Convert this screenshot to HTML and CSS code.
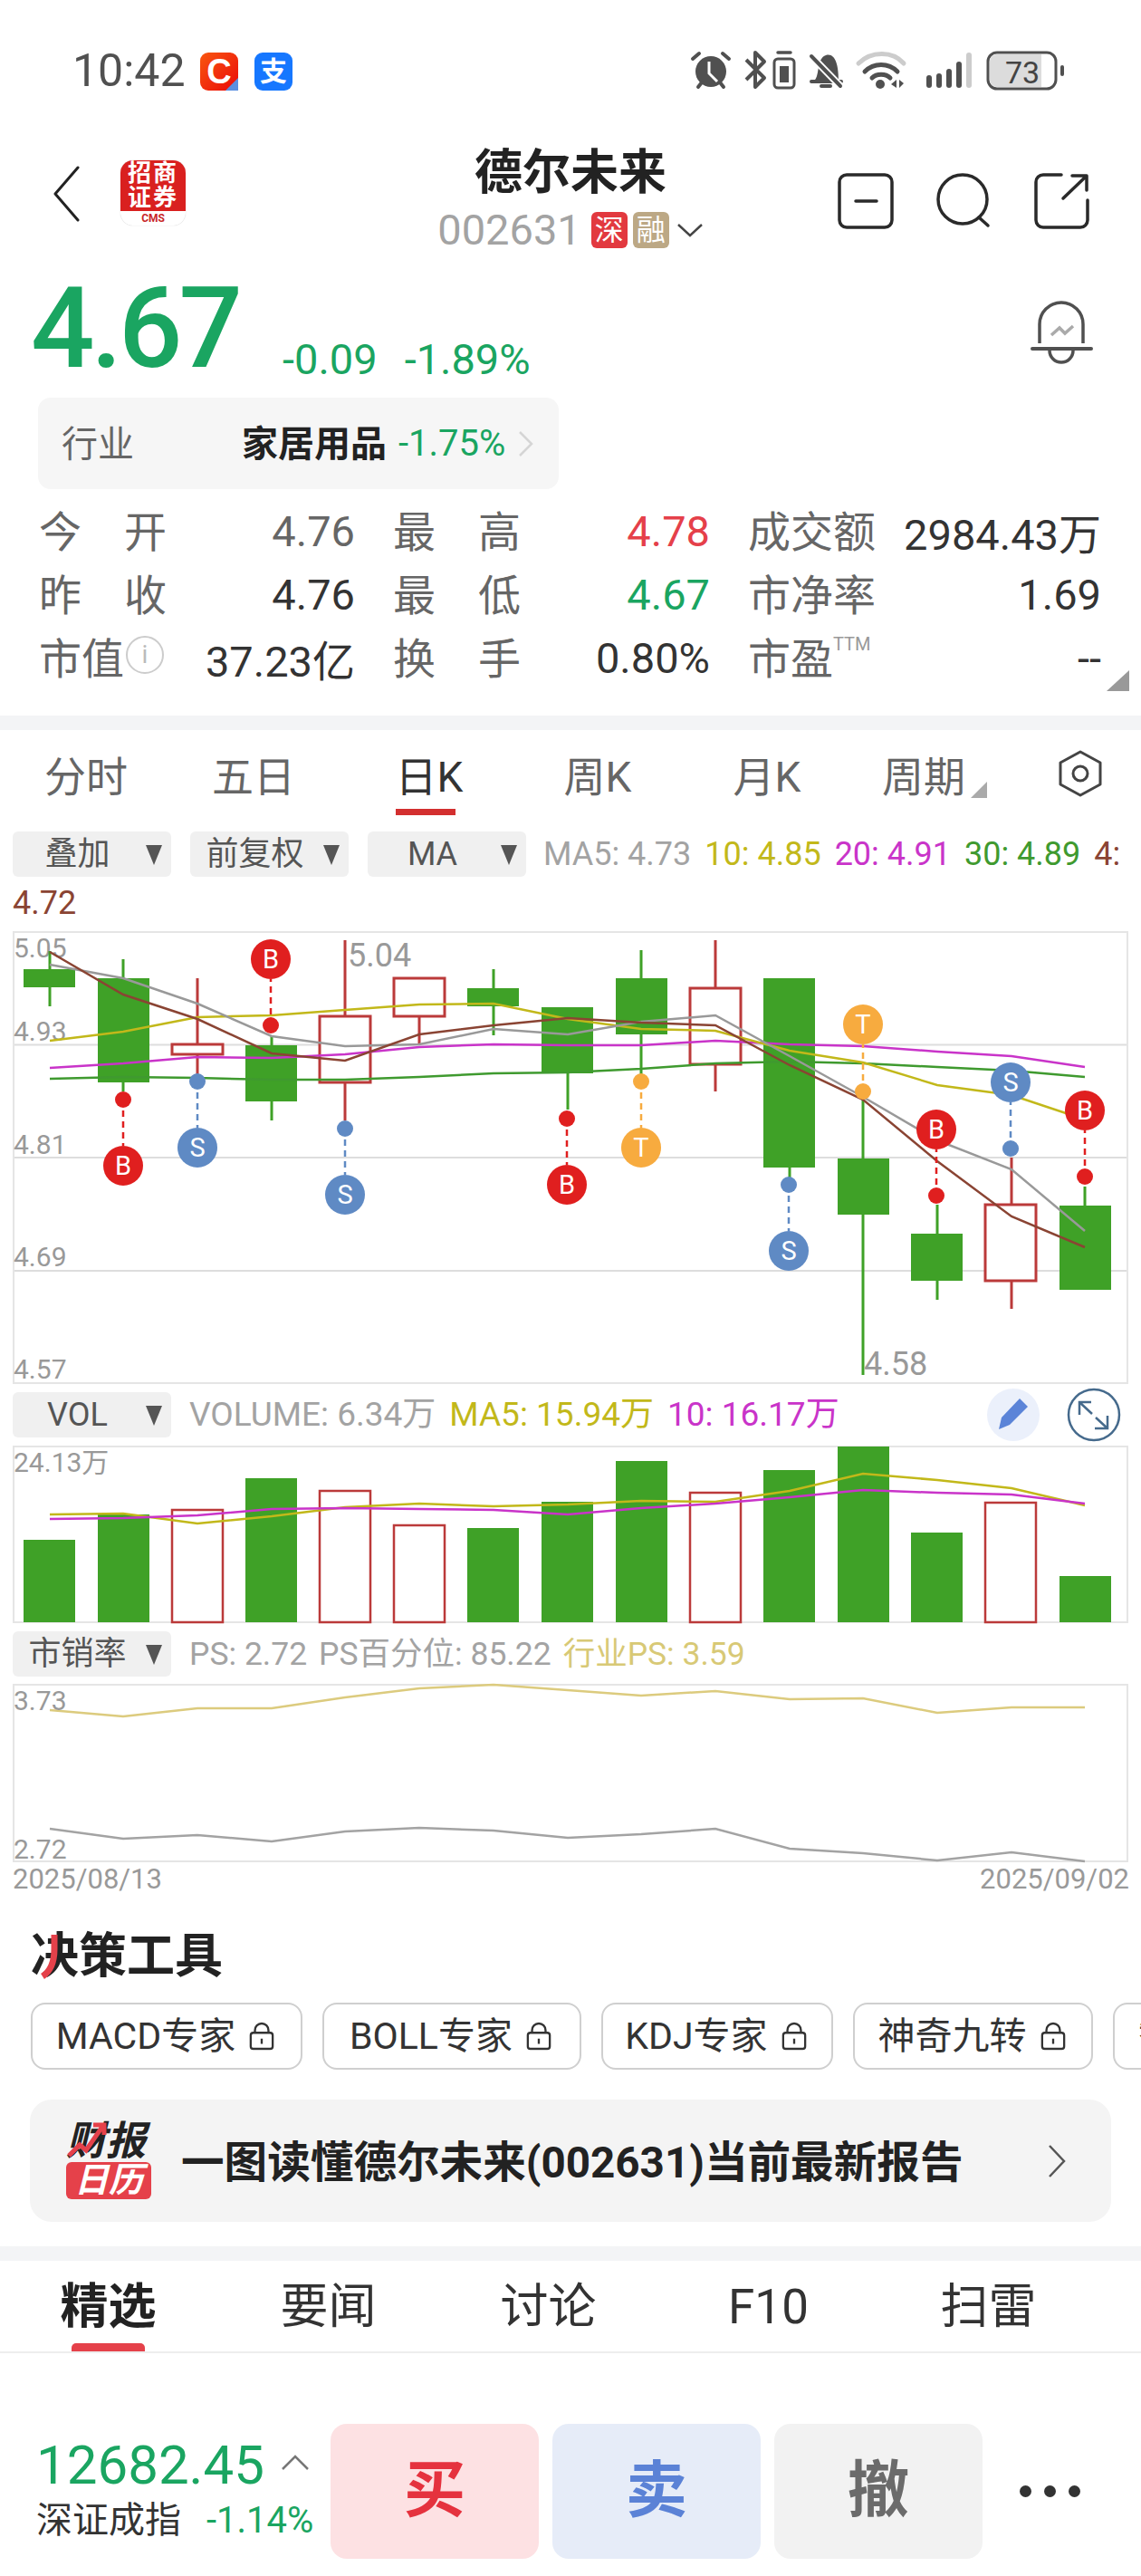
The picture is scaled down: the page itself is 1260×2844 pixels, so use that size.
FILE: index.html
```html
<!DOCTYPE html>
<html lang="zh-CN">
<head>
    <meta charset="UTF-8">
    <meta name="viewport" content="width=device-width, initial-scale=1.0">
    <title>德尔未来</title>
    <link rel="stylesheet" href="styles.css">
</head>
<body>

<div class="page">

    <!-- status bar -->
    <div class="status">
        <span class="clock">10:42</span>
        <span class="app-c">C</span>
        <span class="app-z">支</span>
        <svg class="status-icons" viewBox="760 50 420 56">
            <g fill="#505050" stroke="#505050">
                <circle cx="785" cy="79" r="17" stroke="none"/>
                <path d="M765 65l7-6M805 65l-7-6M771 96l4-5M799 96l-4-5" stroke-width="4" stroke-linecap="round" fill="none"/>
                <path d="M783 68v13l9 9" stroke="#fff" stroke-width="3" fill="none"/>
                <path d="M824 66l20 20-10 10V58l10 10-20 20" stroke-width="4" fill="none" stroke-linejoin="round"/>
                <rect x="855" y="65" width="22" height="32" rx="4" stroke-width="3" fill="none"/>
                <path d="M859 58h14" stroke-width="3.5" stroke-linecap="round"/>
                <rect x="861" y="73" width="10" height="18" stroke="none"/>
                <path d="M900 88c5-5 2-24 12-27 10-3 14 10 14 27z" stroke="none"/>
                <path d="M896 90h33M907 95h10" stroke-width="4" stroke-linecap="round"/>
                <path d="M896 62l32 33" stroke="#fff" stroke-width="8"/>
                <path d="M896 62l32 33" stroke-width="4" stroke-linecap="round"/>
                <path d="M948 70c14-14 38-14 50 0" stroke="#ccc" stroke-width="5" fill="none" stroke-linecap="round"/>
                <path d="M955 79c10-10 26-10 36 0M963 86c5-5 15-5 20 0" stroke-width="5" fill="none" stroke-linecap="round"/>
                <circle cx="972" cy="93" r="5" stroke="none"/>
                <path d="M990 88v9l-6-4zM993 88v9l5-5z" stroke="none"/>
                <g stroke="none">
                    <rect x="1023" y="83" width="6" height="14" rx="3"/>
                    <rect x="1034" y="81" width="6" height="16" rx="3"/>
                    <rect x="1045" y="76" width="6" height="21" rx="3"/>
                    <rect x="1056" y="68" width="6" height="29" rx="3"/>
                    <rect x="1067" y="58" width="6" height="39" rx="3" fill="#ccc"/>
                </g>
                <rect x="1091" y="58" width="75" height="40" rx="10" fill="none" stroke-width="3"/>
                <path d="M1093 68a8 8 0 0 1 8-8h49v36h-49a8 8 0 0 1-8-8z" fill="#dcdcdc" stroke="none"/>
                <rect x="1171" y="72" width="4" height="12" rx="2" stroke="none"/>
                <text x="1129" y="92" class="battery-text" stroke="none">73</text>
            </g>
        </svg>
    </div>

    <!-- header -->
    <div class="head">
        <div class="head-left">
            <svg class="back" viewBox="0 0 32 62"><path d="M28 2L3 31l25 29" fill="none" stroke="#222" stroke-width="3" stroke-linecap="round" stroke-linejoin="round"/></svg>
            <div class="broker">
                <div class="broker-name">招商<br>证券</div>
                <div class="broker-en">CMS</div>
            </div>
        </div>
        <div class="head-mid">
            <div class="stock-name">德尔未来</div>
            <div class="stock-code">
                <span>002631</span>
                <span class="badge badge-red">深</span>
                <span class="badge badge-tan">融</span>
                <svg class="code-arrow" viewBox="0 0 30 16"><path d="M2 2l13 12L28 2" fill="none" stroke="#444" stroke-width="2.5"/></svg>
            </div>
        </div>
        <svg class="head-icons" viewBox="920 186 290 72" fill="none" stroke="#2a2a2a" stroke-width="3.5" stroke-linecap="round" stroke-linejoin="round">
            <rect x="927" y="193" width="58" height="58" rx="8"/>
            <path d="M945 222h23"/>
            <circle cx="1063" cy="220" r="27"/>
            <path d="M1081 240l10 9"/>
            <path d="M1172 193h-20a8 8 0 0 0-8 8v42a8 8 0 0 0 8 8h41a8 8 0 0 0 8-8v-22"/>
            <path d="M1174 219l25-24M1184 194h16v16"/>
        </svg>
    </div>

    <!-- price -->
    <div class="price-row">
        <span class="price">4.67</span>
        <span class="price-chg">-0.09</span>
        <span class="price-chg">-1.89%</span>
        <svg class="alert" viewBox="1136 330 74 78" fill="none" stroke="#505050" stroke-width="3.5">
            <path d="M1148 379v-21a24 24 0 0 1 48 0v21"/>
            <path d="M1140 385h65" stroke-width="4" stroke-linecap="round"/>
            <path d="M1159 387a13 13 0 0 0 26 0"/>
            <path d="M1161 370l9-8 6 6 9-8" stroke="#aaa"/>
        </svg>
    </div>

    <div class="industry">
        <span class="industry-label">行业</span>
        <span class="industry-name">家居用品</span>
        <span class="green">-1.75%</span>
        <svg class="industry-arrow" viewBox="0 0 18 30"><path d="M2 2l13 13L2 28" fill="none" stroke="#d5d5d5" stroke-width="2.5"/></svg>
    </div>

    <!-- quote table -->
    <div class="stats">
        <div class="stat"><span class="stat-label wide"><i>今</i><i>开</i></span><span class="dim">4.76</span></div>
        <div class="stat"><span class="stat-label wide"><i>最</i><i>高</i></span><span class="red">4.78</span></div>
        <div class="stat"><span class="stat-label wide">成交额</span><span>2984.43万</span></div>
        <div class="stat"><span class="stat-label wide"><i>昨</i><i>收</i></span><span>4.76</span></div>
        <div class="stat"><span class="stat-label wide"><i>最</i><i>低</i></span><span class="green">4.67</span></div>
        <div class="stat"><span class="stat-label wide">市净率</span><span>1.69</span></div>
        <div class="stat"><span class="stat-label">市值<em class="info">i</em></span><span>37.23亿</span></div>
        <div class="stat"><span class="stat-label wide"><i>换</i><i>手</i></span><span>0.80%</span></div>
        <div class="stat"><span class="stat-label">市盈<sup class="ttm">TTM</sup></span><span>--</span></div>
        <span class="stats-more"></span>
    </div>

    <div class="band band-top"></div>

    <!-- period tabs -->
    <div class="periods">
        <span>分时</span>
        <span>五日</span>
        <span class="on">日K</span>
        <span>周K</span>
        <span>月K</span>
        <span class="has-corner">周期<b class="corner"></b></span>
        <svg class="hex" viewBox="0 0 50 54" fill="none" stroke="#444" stroke-width="3" stroke-linejoin="round">
            <path d="M25 3l22 12v24L25 51 3 39V15z"/>
            <circle cx="25" cy="27" r="8"/>
        </svg>
    </div>

    <!-- main chart -->
    <div class="tools-row row-ma">
        <span class="pill">叠加</span>
        <span class="pill">前复权</span>
        <span class="pill">MA</span>
        <span class="legend">
            <span class="c-gray">MA5: 4.73</span>
            <span class="c-yellow">10: 4.85</span>
            <span class="c-pink">20: 4.91</span>
            <span class="c-green">30: 4.89</span>
            <span class="c-brown">4:</span>
        </span>
    </div>
    <div class="legend-wrap c-brown">4.72</div>

    <div class="chart chart-k">
        <svg viewBox="16 1030 1228 496">
            <path class="grid" d="M16 1153.5H1244M16 1278H1244M16 1403H1244"/>
            <text class="axis" x="15" y="1057">5.05</text>
            <text class="axis" x="15" y="1149">4.93</text>
            <text class="axis" x="15" y="1274">4.81</text>
            <text class="axis" x="15" y="1398">4.69</text>
            <text class="axis" x="15" y="1522">4.57</text>

            <path class="wick-g" d="M55 1050V1111M136 1059V1205M300 1143V1237M545 1070V1143M627 1185V1225M708 1049V1186M872 1080V1300M953 1214V1518M1035 1330V1435M1198 1310V1331"/>
            <path class="wick-r" d="M218 1080V1186M381 1038V1237M463 1122V1153M790 1038V1205M1117 1278V1445"/>

            <rect class="body-g" x="26" y="1070" width="57" height="20"/>
            <rect class="body-g" x="108" y="1080" width="57" height="115"/>
            <rect class="body-r" x="190" y="1153" width="56" height="11"/>
            <rect class="body-g" x="271" y="1154" width="57" height="62"/>
            <rect class="body-r" x="353" y="1122" width="56" height="73"/>
            <rect class="body-r" x="435" y="1080" width="56" height="42"/>
            <rect class="body-g" x="516" y="1091" width="57" height="20"/>
            <rect class="body-g" x="598" y="1112" width="57" height="73"/>
            <rect class="body-g" x="680" y="1080" width="57" height="62"/>
            <rect class="body-r" x="762" y="1091" width="56" height="84"/>
            <rect class="body-g" x="843" y="1080" width="57" height="209"/>
            <rect class="body-g" x="925" y="1279" width="57" height="62"/>
            <rect class="body-g" x="1006" y="1362" width="57" height="52"/>
            <rect class="body-r" x="1088" y="1330" width="56" height="84"/>
            <rect class="body-g" x="1170" y="1331" width="57" height="93"/>

            <polyline class="ma l-green" points="55,1191 136,1189 218,1190 300,1192 381,1192 463,1189 545,1185 627,1184 708,1180 790,1174 872,1172 953,1174 1035,1178 1117,1182 1198,1189"/>
            <polyline class="ma l-pink" points="55,1179 136,1174 218,1167 300,1168 381,1164 463,1156 545,1153 627,1154 708,1154 790,1149 872,1153 953,1155 1035,1161 1117,1166 1198,1178"/>
            <polyline class="ma l-yellow" points="55,1149 136,1139 218,1123 300,1121 381,1115 463,1109 545,1108 627,1125 708,1136 790,1138 872,1160 953,1173 1035,1198 1117,1209 1198,1236"/>
            <polyline class="ma l-gray" points="55,1065 136,1080 218,1108 300,1144 381,1155 463,1153 545,1136 627,1142 708,1128 790,1121 872,1166 953,1211 1035,1259 1117,1291 1198,1359"/>
            <polyline class="ma l-brown" points="55,1051 136,1098 218,1125 300,1163 381,1171 463,1142 545,1132 627,1124 708,1129 790,1132 872,1176 953,1214 1035,1282 1117,1343 1198,1377"/>

            <!-- buy / sell marks -->
            <g class="mark m-buy">
                <path class="dash" d="M136 1214V1265M299 1132V1081M626 1235V1286M1034 1320V1269M1198 1299V1248"/>
                <circle cx="136" cy="1214" r="9"/><circle cx="136" cy="1287" r="22"/>
                <circle cx="299" cy="1132" r="9"/><circle cx="299" cy="1059" r="22"/>
                <circle cx="626" cy="1235" r="9"/><circle cx="626" cy="1308" r="22"/>
                <circle cx="1034" cy="1320" r="9"/><circle cx="1034" cy="1247" r="22"/>
                <circle cx="1198" cy="1299" r="9"/><circle cx="1198" cy="1226" r="22"/>
                <text x="136" y="1297">B</text>
                <text x="299" y="1069">B</text>
                <text x="626" y="1318">B</text>
                <text x="1034" y="1257">B</text>
                <text x="1198" y="1236">B</text>
            </g>
            <g class="mark m-sell">
                <path class="dash" d="M218 1194V1245M381 1246V1297M871 1308V1359M1116 1268V1217"/>
                <circle cx="218" cy="1194" r="9"/><circle cx="218" cy="1267" r="22"/>
                <circle cx="381" cy="1246" r="9"/><circle cx="381" cy="1319" r="22"/>
                <circle cx="871" cy="1308" r="9"/><circle cx="871" cy="1381" r="22"/>
                <circle cx="1116" cy="1268" r="9"/><circle cx="1116" cy="1195" r="22"/>
                <text x="218" y="1277">S</text>
                <text x="381" y="1329">S</text>
                <text x="871" y="1391">S</text>
                <text x="1116" y="1205">S</text>
            </g>
            <g class="mark m-t">
                <path class="dash" d="M708 1194V1245M953 1205V1153"/>
                <circle cx="708" cy="1194" r="9"/><circle cx="708" cy="1267" r="22"/>
                <circle cx="953" cy="1205" r="9"/><circle cx="953" cy="1131" r="22"/>
                <text x="708" y="1277">T</text>
                <text x="953" y="1141">T</text>
            </g>

            <text class="axis axis-big" x="384" y="1067">5.04</text>
            <text class="axis axis-big" x="954" y="1518">4.58</text>
        </svg>
    </div>

    <!-- volume -->
    <div class="tools-row row-vol">
        <span class="pill">VOL</span>
        <span class="legend">
            <span class="c-gray">VOLUME: 6.34万</span>
            <span class="c-yellow">MA5: 15.94万</span>
            <span class="c-pink">10: 16.17万</span>
        </span>
        <svg class="round-icons" viewBox="1088 1530 152 64">
            <circle cx="1119" cy="1562" r="29" fill="#ebf0fb"/>
            <path d="M1103 1578l3-13 20-21 9 9-20 20z" fill="#5b84d8"/>
            <circle cx="1208" cy="1562" r="28" fill="none" stroke="#456a8c" stroke-width="2.5"/>
            <path d="M1192 1562v-14h13M1192 1548l14 13M1223 1563v14h-14M1223 1577l-13-12" fill="none" stroke="#456a8c" stroke-width="2.5"/>
        </svg>
    </div>
    <div class="chart chart-vol">
        <svg viewBox="16 1598 1228 192">
            <g class="bar-g">
                <rect x="26" y="1700" width="57" height="91"/>
                <rect x="108" y="1672" width="57" height="119"/>
                <rect x="271" y="1632" width="57" height="159"/>
                <rect x="516" y="1687" width="57" height="104"/>
                <rect x="598" y="1658" width="57" height="133"/>
                <rect x="680" y="1613" width="57" height="178"/>
                <rect x="843" y="1623" width="57" height="168"/>
                <rect x="925" y="1597" width="57" height="194"/>
                <rect x="1006" y="1692" width="57" height="99"/>
                <rect x="1170" y="1740" width="57" height="51"/>
            </g>
            <g class="bar-r">
                <rect x="190" y="1667" width="56" height="124"/>
                <rect x="353" y="1646" width="56" height="145"/>
                <rect x="435" y="1684" width="56" height="107"/>
                <rect x="762" y="1648" width="56" height="143"/>
                <rect x="1088" y="1659" width="56" height="132"/>
            </g>
            <polyline class="ma l-yellow" points="55,1672 136,1671 218,1682 300,1674 381,1664 463,1660 545,1663 627,1661 708,1657 790,1658 872,1646 953,1627 1035,1634 1117,1643 1198,1662"/>
            <polyline class="ma l-pink" points="55,1677 136,1676 218,1673 300,1666 381,1665 463,1666 545,1667 627,1672 708,1665 790,1660 872,1653 953,1645 1035,1648 1117,1650 1198,1660"/>
            <text class="axis" x="15" y="1625">24.13万</text>
        </svg>
    </div>

    <!-- PS -->
    <div class="tools-row row-ps">
        <span class="pill">市销率</span>
        <span class="legend">
            <span class="c-gray">PS: 2.72</span>
            <span class="c-gray">PS百分位: 85.22</span>
            <span class="c-sand">行业PS: 3.59</span>
        </span>
    </div>
    <div class="chart chart-ps">
        <svg viewBox="16 1861 1228 193">
            <polyline class="ma l-sand" points="55,1888 136,1895 218,1886 300,1886 381,1874 463,1864 545,1860 627,1866 708,1872 790,1867 872,1876 953,1875 1035,1891 1117,1885 1198,1885"/>
            <polyline class="ma l-stone" points="55,2019 136,2030 218,2026 300,2033 381,2022 463,2018 545,2021 627,2029 708,2025 790,2019 872,2041 953,2046 1035,2054 1117,2045 1198,2055"/>
            <text class="axis" x="15" y="1888">3.73</text>
            <text class="axis" x="15" y="2052">2.72</text>
        </svg>
    </div>
    <div class="dates">
        <span>2025/08/13</span>
        <span>2025/09/02</span>
    </div>

    <!-- decision tools -->
    <div class="section-title">
        决策工具
        <svg class="title-mark" viewBox="0 0 26 52"><path d="M18 2v16c0 14-4 24-13 30" fill="none" stroke="#e5414a" stroke-width="7"/></svg>
    </div>
    <div class="chips">
        <span class="chip">MACD专家<svg class="lock" viewBox="0 0 30 34"><use href="#lock"/></svg></span>
        <span class="chip">BOLL专家<svg class="lock" viewBox="0 0 30 34"><use href="#lock"/></svg></span>
        <span class="chip">KDJ专家<svg class="lock" viewBox="0 0 30 34"><use href="#lock"/></svg></span>
        <span class="chip">神奇九转<svg class="lock" viewBox="0 0 30 34"><use href="#lock"/></svg></span>
        <span class="chip chip-cut">智能</span>
    </div>
    <svg class="defs">
        <symbol id="lock" viewBox="0 0 30 34">
            <path d="M7 13v-3a8 8 0 0 1 16 0v3" fill="none" stroke="#333" stroke-width="2.5"/>
            <rect x="2" y="13" width="26" height="19" rx="3" fill="none" stroke="#333" stroke-width="2.5"/>
            <path d="M15 20v6" stroke="#333" stroke-width="2.5"/>
        </symbol>
    </svg>

    <div class="report">
        <div class="report-logo">
            <div class="report-top">财报</div>
            <div class="report-bot">日历</div>
            <svg class="report-arrow" viewBox="0 0 46 40"><path d="M3 37l12-12 7 6L40 5M30 3h12v11" fill="none" stroke="#e5414a" stroke-width="5"/></svg>
        </div>
        <span class="report-text">一图读懂德尔未来(002631)当前最新报告</span>
        <svg class="report-arrow-r" viewBox="0 0 22 38"><path d="M3 2l16 17L3 36" fill="none" stroke="#555" stroke-width="2.5"/></svg>
    </div>

    <div class="band band-mid"></div>

    <!-- news tabs -->
    <div class="news-tabs">
        <span class="on">精选</span>
        <span>要闻</span>
        <span>讨论</span>
        <span>F10</span>
        <span>扫雷</span>
    </div>

    <!-- bottom bar -->
    <div class="bottom">
        <div class="index-box">
            <div class="index-top">
                <span class="index-val">12682.45</span>
                <svg class="index-up" viewBox="0 0 32 18"><path d="M2 16L16 2l14 14" fill="none" stroke="#777" stroke-width="2.5"/></svg>
            </div>
            <div class="index-sub">
                <span>深证成指</span>
                <span class="green">-1.14%</span>
            </div>
        </div>
        <div class="trade t-buy">买</div>
        <div class="trade t-sell">卖</div>
        <div class="trade t-undo">撤</div>
        <div class="more"><i></i><i></i><i></i></div>
    </div>

</div>

</body>
</html>
```

FILE: styles.css
```css
/* page */
html, body {
    margin: 0;
    padding: 0;
    background: #fff;
}
.page {
    width: 1260px;
    height: 2844px;
    overflow: hidden;
    font-family: Roboto, "Noto Sans CJK SC", sans-serif;
    color: #333;
}
.green { color: #1aa561; }
.red { color: #e5404a; }
.dim { color: #666; }

/* status bar */
.status {
    height: 120px;
    box-sizing: border-box;
    padding: 50px 0 0 80px;
    display: flex;
    align-items: flex-start;
}
.clock {
    font-size: 50px;
    line-height: 56px;
    color: #505050;
    width: 141px;
}
.app-c, .app-z {
    width: 42px;
    height: 42px;
    margin-top: 8px;
    border-radius: 9px;
    color: #fff;
    text-align: center;
    position: relative;
}
.app-c {
    background: linear-gradient(135deg, #f9560f, #ea0a0a);
    font: bold 38px/42px "Liberation Sans", sans-serif;
}
.app-c::after {
    content: "";
    position: absolute;
    right: 0;
    bottom: 0;
    border-left: 14px solid transparent;
    border-bottom: 14px solid #5b8fe0;
}
.app-z {
    margin-left: 18px;
    background: #1677ff;
    font-size: 30px;
    line-height: 42px;
    font-weight: bold;
}
.status-icons {
    width: 420px;
    height: 56px;
    margin-left: auto;
    margin-right: 80px;
}
.battery-text {
    font-size: 34px;
    text-anchor: middle;
    fill: #444;
}

/* header */
.head {
    height: 180px;
    display: grid;
    grid-template-columns: 1fr auto 1fr;
    position: relative;
}
.head-left {
    display: flex;
    align-items: flex-start;
    padding: 57px 0 0 58px;
}
.back {
    width: 32px;
    height: 62px;
    margin-top: 6px;
}
.broker {
    width: 72px;
    height: 72px;
    margin-left: 43px;
    border-radius: 14px;
    background: #fff;
    overflow: hidden;
    box-shadow: 0 0 1px #bbb;
}
.broker-name {
    height: 56px;
    background: #d9201f;
    color: #fff;
    font-size: 26px;
    line-height: 27px;
    letter-spacing: 2px;
    font-weight: bold;
    text-align: center;
    padding-top: 1px;
    box-sizing: border-box;
}
.broker-en {
    color: #c8282a;
    font: bold 12px/16px Roboto, sans-serif;
    text-align: center;
}
.head-mid {
    text-align: center;
    padding-top: 38px;
}
.stock-name {
    font-size: 53px;
    line-height: 66px;
    font-weight: bold;
    color: #222;
}
.stock-code {
    display: flex;
    align-items: center;
    font-size: 47px;
    line-height: 50px;
    color: #a3a3a3;
    margin-top: 5px;
}
.badge {
    width: 40px;
    height: 40px;
    margin-left: 6px;
    border-radius: 6px;
    color: #fff;
    font-size: 32px;
    line-height: 40px;
    text-align: center;
}
.badge-red { margin-left: 11px; background: #e2393f; }
.badge-tan { background: #bca885; }
.code-arrow {
    width: 30px;
    height: 16px;
    margin-left: 8px;
}
.head-icons {
    width: 290px;
    height: 72px;
    margin: 66px 0 0 auto;
    margin-right: 50px;
}

/* price */
.price-row {
    height: 130px;
    display: flex;
    align-items: flex-start;
    padding-left: 34px;
    color: #1aa561;
    position: relative;
}
.price {
    font-size: 124px;
    line-height: 124px;
    font-weight: 500;
    letter-spacing: -4px;
    width: 278px;
    margin-top: 1px;
}
.price-chg {
    font-size: 47px;
    line-height: 50px;
    margin-top: 72px;
    margin-right: 30px;
}
.alert {
    width: 74px;
    height: 78px;
    margin: 30px 50px 0 auto;
}
.industry {
    width: 575px;
    height: 101px;
    margin: 9px 0 0 42px;
    padding-left: 26px;
    box-sizing: border-box;
    background: #f6f6f6;
    border-radius: 14px;
    display: flex;
    align-items: center;
    font-size: 40px;
}
.industry-label { color: #666; width: 199px; margin-bottom: 6px; }
.industry-name { color: #222; font-weight: bold; width: 173px; margin-bottom: 6px; }
.industry-arrow {
    width: 18px;
    height: 30px;
    margin-left: 14px;
}

/* quote table */
.stats {
    margin: 11px 0 0 43px;
    width: 1174px;
    display: grid;
    grid-template-columns: 349px 350px 390px;
    column-gap: 42px;
    grid-auto-rows: 70px;
    font-size: 47px;
    position: relative;
}
.stat {
    display: flex;
    justify-content: space-between;
    align-items: center;
}
.stat-label {
    color: #666;
    display: flex;
    align-items: center;
    margin-bottom: 6px;
}
.stat-label.wide {
    width: 141px;
    justify-content: space-between;
    white-space: nowrap;
}
.stat-label i { font-style: normal; }
.info {
    width: 38px;
    height: 38px;
    margin-left: 2px;
    border: 2px solid #ccc;
    border-radius: 50%;
    color: #bbb;
    font: normal 28px/38px Roboto, sans-serif;
    text-align: center;
}
.ttm {
    font-size: 20px;
    color: #999;
    line-height: 20px;
    align-self: flex-start;
    margin-top: 12px;
}
.stats-more {
    position: absolute;
    right: -30px;
    bottom: -2px;
    border-left: 25px solid transparent;
    border-bottom: 23px solid #999;
}
.band { background: #f3f4f6; }
.band-top { height: 16px; margin-top: 29px; }
.band-mid { height: 16px; margin-top: 27px; }

/* period tabs */
.periods {
    height: 95px;
    display: grid;
    grid-template-columns: 190px 180px 208px 164px 210px 136px 1fr;
    align-items: center;
    font-size: 46px;
    color: #666;
    text-align: center;
}
.periods .on {
    color: #333;
    position: relative;
}
.periods .on::after {
    content: "";
    position: absolute;
    left: 67px;
    top: 72px;
    width: 66px;
    height: 7px;
    background: #d32f2f;
}
.has-corner { position: relative; }
.corner {
    position: absolute;
    right: -2px;
    bottom: 6px;
    border-left: 18px solid transparent;
    border-bottom: 18px solid #aaa;
}
.hex {
    width: 50px;
    height: 54px;
    justify-self: end;
    margin-right: 42px;
}

/* chart toolbars */
.tools-row {
    display: flex;
    align-items: center;
    height: 50px;
    margin-top: 9px;
    padding-left: 14px;
    white-space: nowrap;
}
.row-ma { margin-top: 17px; }
.pill {
    width: 175px;
    height: 50px;
    box-sizing: border-box;
    padding-right: 32px;
    margin-right: 21px;
    flex: none;
    background: #f0f0f0;
    border-radius: 6px;
    color: #555;
    font-size: 36px;
    line-height: 50px;
    text-align: center;
    position: relative;
}
.pill::after {
    content: "";
    position: absolute;
    right: 10px;
    top: 15px;
    border-top: 22px solid #555;
    border-left: 9px solid transparent;
    border-right: 9px solid transparent;
}
.legend {
    display: flex;
    align-items: baseline;
    gap: 15px;
    font-size: 36px;
    line-height: 50px;
    margin-left: -2px;
}
.row-vol .pill, .row-ps .pill { margin-right: 22px; }
.row-vol .legend { font-size: 37px; }
.row-ps .legend { font-size: 35.5px; gap: 13px; }
.c-gray { color: #a3a3a3; }
.c-yellow { color: #c2b81a; }
.c-pink { color: #c934c9; }
.c-green { color: #3f9a2f; }
.c-brown { color: #8a4433; }
.c-sand { color: #d8c976; }
.legend-wrap {
    height: 60px;
    padding-left: 14px;
    font-size: 36px;
    line-height: 58px;
}

/* charts */
.chart {
    margin: 0 14px;
    box-sizing: border-box;
    border: 2px solid #e5e5e5;
}
.chart svg {
    display: block;
    width: 100%;
    height: 100%;
    overflow: visible;
}
.chart-k { height: 500px; }
.chart-vol { height: 196px; margin-top: 9px; }
.chart-ps { height: 197px; margin-top: 8px; }
.grid {
    stroke: #ddd;
    stroke-width: 2;
    fill: none;
}
.axis {
    font-size: 30px;
    fill: #999;
}
.axis-big { font-size: 36px; }
.wick-g, .wick-r { stroke-width: 3; fill: none; }
.wick-g { stroke: #3fa127; }
.wick-r { stroke: #bb3a3a; }
.body-g { fill: #3fa127; }
.body-r {
    fill: #fff;
    stroke: #bb3a3a;
    stroke-width: 3;
}
.ma {
    fill: none;
    stroke-width: 2.5;
}
.l-gray { stroke: #999; }
.l-brown { stroke: #8a4433; }
.l-yellow { stroke: #c2b81a; }
.l-pink { stroke: #c934c9; }
.l-green { stroke: #3f9a2f; }
.l-sand { stroke: #dccb7e; }
.l-stone { stroke: #a3a3a3; }
.mark text {
    font-size: 29px;
    fill: #fff;
    text-anchor: middle;
}
.dash {
    stroke-width: 2.5;
    stroke-dasharray: 7 5;
    fill: none;
}
.m-buy circle { fill: #e01f1f; }
.m-buy .dash { stroke: #e01f1f; }
.m-sell circle { fill: #5f8ac4; }
.m-sell .dash { stroke: #5f8ac4; }
.m-t circle { fill: #f7ab3f; }
.m-t .dash { stroke: #f7ab3f; }
.bar-g { fill: #3fa127; }
.bar-r rect {
    fill: #fff;
    stroke: #bb3a3a;
    stroke-width: 2.5;
}
.round-icons {
    width: 152px;
    height: 64px;
    margin-left: auto;
    margin-right: 20px;
    flex: none;
}
.dates {
    display: flex;
    justify-content: space-between;
    padding: 0 13px 0 14px;
    font-size: 31px;
    line-height: 34px;
    color: #999;
    margin-top: 2px;
}

/* decision tools */
.section-title {
    margin: 40px 0 0 34px;
    width: 212px;
    font-size: 53px;
    line-height: 56px;
    font-weight: bold;
    color: #222;
    position: relative;
}
.title-mark {
    position: absolute;
    left: 8px;
    top: 2px;
    width: 26px;
    height: 52px;
}
.chips {
    display: grid;
    grid-template-columns: 300px 286px 256px 265px 200px;
    gap: 22px;
    margin: 23px 0 0 34px;
    white-space: nowrap;
}
.chip {
    height: 74px;
    box-sizing: border-box;
    padding-right: 3px;
    border: 2px solid #cfcfcf;
    border-radius: 16px;
    display: flex;
    align-items: center;
    justify-content: center;
    font-size: 41px;
    line-height: 64px;
    color: #333;
}
.chip-cut { justify-content: flex-start; padding-left: 26px; }
.lock {
    width: 28px;
    height: 32px;
    margin-left: 15px;
}
.defs {
    display: block;
    width: 0;
    height: 0;
}
.report {
    width: 1194px;
    height: 135px;
    margin: 33px 0 0 33px;
    background: #f4f4f4;
    border-radius: 24px;
    display: flex;
    align-items: center;
    position: relative;
}
.report-logo {
    width: 94px;
    margin-left: 40px;
    position: relative;
}
.report-top {
    font-size: 44px;
    line-height: 42px;
    font-weight: bold;
    font-style: italic;
    color: #222;
    white-space: nowrap;
}
.report-bot {
    margin-top: 2px;
    height: 41px;
    background: #e5414a;
    border-radius: 6px;
    color: #fff;
    font-size: 38px;
    line-height: 40px;
    font-weight: bold;
    font-style: italic;
    text-align: center;
    white-space: nowrap;
}
.report-arrow {
    position: absolute;
    left: 0;
    top: 0;
    width: 46px;
    height: 40px;
}
.report-text {
    margin: 0 0 5px 33px;
    font-size: 47.6px;
    font-weight: bold;
    color: #222;
    white-space: nowrap;
}
.report-arrow-r {
    position: absolute;
    right: 49px;
    top: 49px;
    width: 22px;
    height: 38px;
}

/* news tabs */
.news-tabs {
    height: 102px;
    box-sizing: border-box;
    margin-left: -2px;
    display: grid;
    grid-template-columns: repeat(5, 243px);
    font-size: 53px;
    line-height: 103px;
    text-align: center;
    color: #333;
    border-bottom: 2px solid #eee;
}
.news-tabs .on {
    font-weight: bold;
    color: #222;
    position: relative;
}
.news-tabs .on::after {
    content: "";
    position: absolute;
    left: 81px;
    top: 91px;
    width: 81px;
    height: 9px;
    border-radius: 5px 5px 0 0;
    background: #e5414a;
}

/* bottom bar */
.bottom {
    display: flex;
    margin-top: 78px;
    height: 149px;
    position: relative;
}
.index-box {
    width: 365px;
    flex: none;
    padding-left: 40px;
    box-sizing: border-box;
}
.index-top {
    display: flex;
    align-items: center;
    margin-top: 12px;
}
.index-val {
    font-size: 60px;
    line-height: 68px;
    color: #1aa561;
}
.index-up {
    width: 32px;
    height: 18px;
    margin-left: 18px;
    margin-top: -6px;
}
.index-sub {
    display: flex;
    gap: 28px;
    font-size: 40px;
    line-height: 54px;
    margin-top: 0;
    white-space: nowrap;
}
.trade {
    width: 230px;
    height: 149px;
    margin-right: 15px;
    flex: none;
    border-radius: 18px;
    font-size: 68px;
    line-height: 149px;
    font-weight: bold;
    text-align: center;
}
.t-buy { background: #fde1e3; color: #e5323e; }
.t-sell { background: #e6ecf8; color: #5b82d6; }
.t-undo { background: #f2f2f2; color: #6b6b6b; }
.more {
    display: flex;
    gap: 14px;
    align-items: center;
    margin-left: 26px;
}
.more i {
    width: 13px;
    height: 13px;
    background: #333;
    border-radius: 50%;
}
```
